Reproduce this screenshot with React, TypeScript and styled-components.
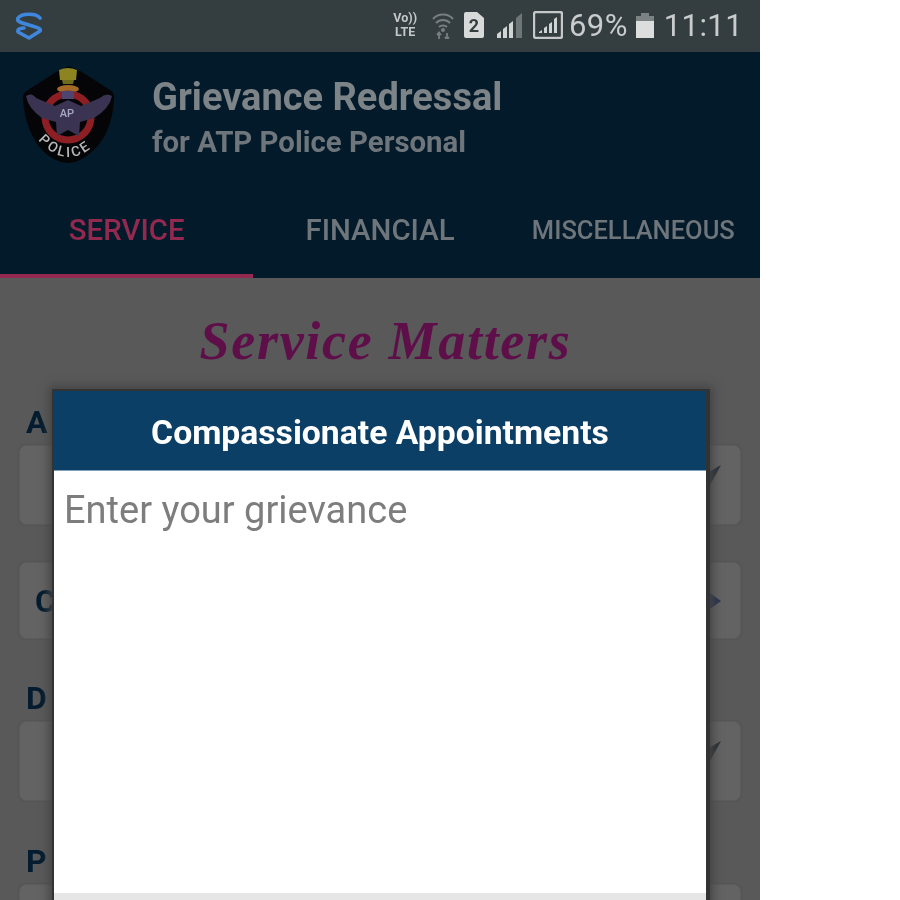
import React from "react";
import styled, { createGlobalStyle } from "styled-components";

const GlobalStyle = createGlobalStyle`
  html, body {
    margin: 0;
    padding: 0;
    background: #fff;
    font-family: Roboto, "Liberation Sans", sans-serif;
  }
`;

const Phone = styled.div`
  position: relative;
  width: 760px;
  height: 900px;
  overflow: hidden;
  background: #595959;
  filter: blur(0.5px);
`;

const StatusBar = styled.div`
  height: 52px;
  background: #343d40;
  display: flex;
  align-items: center;
  padding: 0 17px 2px 14px;
  box-sizing: border-box;
  color: #c9cccc;
`;

const StatusIcons = styled.div`
  margin-left: auto;
  display: flex;
  align-items: center;
  gap: 10px;
`;

const VolteLabel = styled.div`
  font-size: 12.5px;
  font-weight: 700;
  line-height: 14px;
  text-align: center;
  color: #c4c8c8;
  margin-right: 5px;
`;

const BatteryText = styled.span`
  font-size: 31px;
  letter-spacing: 0.4px;
  margin: 0 -2px 0 -4px;
`;

const Clock = styled.span`
  font-size: 31px;
  letter-spacing: 0.4px;
  font-weight: 400;
`;

const AppHeader = styled.div`
  background: #031a2a;
`;

const TitleRow = styled.div`
  height: 135px;
  display: flex;
  align-items: flex-start;
  padding: 14px 0 0 22px;
  box-sizing: border-box;
  gap: 36px;
`;

const TitleBlock = styled.div`
  padding-top: 10px;
`;

const AppTitle = styled.div`
  font-size: 38px;
  line-height: 42px;
  font-weight: 700;
  color: #7d8488;
`;

const AppSubtitle = styled.div`
  font-size: 29.4px;
  line-height: 34px;
  margin-top: 7px;
  font-weight: 700;
  color: #6f767b;
`;

const Tabs = styled.div`
  display: grid;
  grid-template-columns: repeat(3, 1fr);
  height: 91px;
`;

const Tab = styled.div<{ $active?: boolean; $small?: boolean }>`
  display: flex;
  align-items: center;
  justify-content: center;
  padding-bottom: 2px;
  box-sizing: border-box;
  font-size: ${(p) => (p.$small ? "25.5px" : "29.4px")};
  font-weight: 500;
  white-space: nowrap;
  color: ${(p) => (p.$active ? "#93294f" : "#6f767b")};
  border-bottom: 4px solid ${(p) => (p.$active ? "#93294f" : "transparent")};
`;

const Content = styled.div`
  padding: 0 19px;
`;

const PageTitle = styled.div`
  font-family: "Liberation Serif", serif;
  font-style: italic;
  font-weight: 700;
  font-size: 54px;
  line-height: 60px;
  letter-spacing: 1.7px;
  color: #5e0e48;
  text-align: center;
  margin: 33px 0 0 11px;
`;

const FieldLabel = styled.div<{ $top: number }>`
  font-size: 32px;
  line-height: 38px;
  font-weight: 700;
  color: #031c30;
  margin: ${(p) => p.$top}px 0 4px 7px;
`;

const SelectBox = styled.div<{ $top?: number; $height?: number }>`
  height: ${(p) => p.$height ?? 80}px;
  margin-top: ${(p) => p.$top ?? 0}px;
  border-radius: 7px;
  background: #636363;
  border: 1px solid #5c5c5c;
  box-shadow: 0 0 2px #4d4d4d;
  display: flex;
  align-items: center;
  justify-content: space-between;
  padding: 0 19px 0 15px;
  box-sizing: border-box;
  font-size: 32px;
  font-weight: 700;
  color: #031c30;
`;

const ArrowWrap = styled.span<{ $lift?: number }>`
  display: flex;
  margin-left: auto;
  margin-bottom: ${(p) => p.$lift ?? 0}px;
`;

const Modal = styled.div`
  position: absolute;
  left: 52px;
  top: 389px;
  width: 658px;
  height: 560px;
  background: #fff;
  border: 2px solid #333;
  border-right-width: 4px;
  box-sizing: border-box;
  box-shadow: 0 0 9px 3px #444;
`;

const ModalHeader = styled.div`
  height: 80px;
  background: #0c3f66;
  border-bottom: 1px solid #7fa0b8;
  padding-top: 3px;
  box-sizing: border-box;
  display: flex;
  align-items: center;
  justify-content: center;
  font-size: 33.7px;
  font-weight: 700;
  color: #fff;
`;

const Placeholder = styled.div`
  font-size: 38px;
  line-height: 42px;
  color: #7d7d7d;
  padding: 18px 0 0 10px;
  height: 422px;
  box-sizing: border-box;
`;

const ModalFooter = styled.div`
  height: 60px;
  background: #e6e6e6;
`;

const ShieldLogo = () => (
  <svg width="30" height="30" viewBox="0 0 30 30" fill="none" stroke="#3f87dc" strokeWidth="3.6" strokeLinecap="round" strokeLinejoin="round">
    <path d="M26 8 C22 3 8 3 4 8 C2 12 9 13 15 15 C21 17 28 18 26 21 L15 28 L4 22 C3 19 7 18 10 18" />
  </svg>
);

const WifiIcon = () => (
  <svg width="22" height="27" viewBox="0 0 22 27" fill="none" stroke="#777f80" strokeWidth="2">
    <path d="M1 7 C6 1 16 1 21 7" />
    <path d="M4 11 C8 7 14 7 18 11" />
    <path d="M7 15 C9 13 13 13 15 15" />
    <circle cx="11" cy="18" r="1" fill="#777f80" />
    <path d="M7 27 V21 M5 23 L7 20.5 L9 23 M15 21 V27 M13 25 L15 27.5 L17 25" strokeWidth="1.8" />
  </svg>
);

const SimIcon = () => (
  <svg width="20" height="26" viewBox="0 0 20 26">
    <path d="M2 0 H13 L20 6 V24 Q20 26 18 26 H2 Q0 26 0 24 V2 Q0 0 2 0 Z" fill="#d8dada" />
    <text x="10" y="20" textAnchor="middle" fontFamily="Roboto, sans-serif" fontSize="18" fontWeight="700" fill="#343d40">2</text>
  </svg>
);

const SignalBars = () => (
  <svg width="26" height="26" viewBox="0 0 26 26" style={{ marginLeft: 3 }}>
    <path d="M0 26 V22 L4 19 V26 Z" fill="#d0d3d3" />
    <path d="M6 26 V17 L10 14 V26 Z" fill="#d0d3d3" />
    <path d="M12 26 V12 L16 9 V26 Z" fill="#d0d3d3" />
    <path d="M19 26 V6 L25 1 V26 Z" fill="#6e7677" />
  </svg>
);

const BoxedSignal = () => (
  <svg width="30" height="28" viewBox="0 0 30 28" fill="none">
    <rect x="1" y="1" width="28" height="26" rx="2" stroke="#c4c8c8" strokeWidth="2.4" />
    <path d="M6 22 H9 V19 L6 21 Z M11 22 H14 V15 L11 17 Z M16 22 H19 V11 L16 13 Z M21 22 H24 V6 L21 8 Z" fill="#d0d3d3" />
  </svg>
);

const BatteryIcon = () => (
  <svg width="18" height="25" viewBox="0 0 18 25">
    <path d="M5 0 H13 V3 H18 V8 H0 V3 H5 Z" fill="#7b8283" />
    <path d="M0 8 H18 V25 H0 Z" fill="#dcdede" />
  </svg>
);

const PoliceBadge = () => (
  <svg width="94" height="98" viewBox="0 0 94 98">
    <path d="M47 0 L60 6 L88 24 Q93 27 92 34 Q90 66 72 84 Q58 97 46 97 Q30 96 18 82 Q3 62 1 34 Q0 27 6 24 L34 6 Z" fill="#050507" />
    <path d="M37 4 Q46 0 55 4 L54 14 H38 Z" fill="#8b8420" />
    <path d="M40 14 H52 L51 18 H41 Z" fill="#6f6b1c" />
    <ellipse cx="46" cy="23" rx="11" ry="4" fill="#a26a26" />
    <circle cx="46" cy="51" r="23" fill="none" stroke="#8d1f24" strokeWidth="7" />
    <path d="M4 30 Q10 26 14 32 L33 40 L46 34 L59 40 L78 32 Q84 26 90 30 Q88 42 72 52 L58 56 L57 70 L46 64 L35 70 L34 56 L20 52 Q6 42 4 30 Z" fill="#3a3452" />
    <rect x="40" y="25" width="12" height="8" fill="#4d4570" />
    <text x="45" y="51" textAnchor="middle" fontFamily="Roboto, sans-serif" fontSize="11" fontWeight="500" fill="#a9a9c4">AP</text>
    <path id="police-arc" d="M13 70 Q46 112 82 70" fill="none" />
    <text fontFamily="Roboto, sans-serif" fontSize="14" fontWeight="500" letterSpacing="2.5" fill="#b9b9b9">
      <textPath href="#police-arc" startOffset="6%">POLICE</textPath>
    </text>
  </svg>
);

const SlantArrow = () => (
  <svg width="14" height="20" viewBox="0 0 14 20">
    <path d="M14 0 L0 8 L3 20 Z" fill="#2b3138" />
  </svg>
);

const RightArrow = () => (
  <svg width="14" height="20" viewBox="0 0 14 20">
    <path d="M0 0 L14 10 L0 20 Z" fill="#2c3350" />
  </svg>
);

export default function App() {
  return (
    <>
      <GlobalStyle />
      <Phone>
        <StatusBar>
          <ShieldLogo />
          <StatusIcons>
            <VolteLabel>
              Vo))
              <br />
              LTE
            </VolteLabel>
            <WifiIcon />
            <SimIcon />
            <SignalBars />
            <BoxedSignal />
            <BatteryText>69%</BatteryText>
            <BatteryIcon />
            <Clock>11:11</Clock>
          </StatusIcons>
        </StatusBar>
        <AppHeader>
          <TitleRow>
            <PoliceBadge />
            <TitleBlock>
              <AppTitle>Grievance Redressal</AppTitle>
              <AppSubtitle>for ATP Police Personal</AppSubtitle>
            </TitleBlock>
          </TitleRow>
          <Tabs>
            <Tab $active>SERVICE</Tab>
            <Tab>FINANCIAL</Tab>
            <Tab $small>MISCELLANEOUS</Tab>
          </Tabs>
        </AppHeader>
        <Content>
          <PageTitle>Service Matters</PageTitle>
          <FieldLabel $top={32}>A</FieldLabel>
          <SelectBox>
            <ArrowWrap $lift={20}>
              <SlantArrow />
            </ArrowWrap>
          </SelectBox>
          <SelectBox $top={37} $height={77}>
            C
            <ArrowWrap>
              <RightArrow />
            </ArrowWrap>
          </SelectBox>
          <FieldLabel $top={40}>D</FieldLabel>
          <SelectBox>
            <ArrowWrap $lift={20}>
              <SlantArrow />
            </ArrowWrap>
          </SelectBox>
          <FieldLabel $top={41}>P</FieldLabel>
          <SelectBox />
        </Content>
        <Modal>
          <ModalHeader>Compassionate Appointments</ModalHeader>
          <Placeholder>Enter your grievance</Placeholder>
          <ModalFooter />
        </Modal>
      </Phone>
    </>
  );
}
